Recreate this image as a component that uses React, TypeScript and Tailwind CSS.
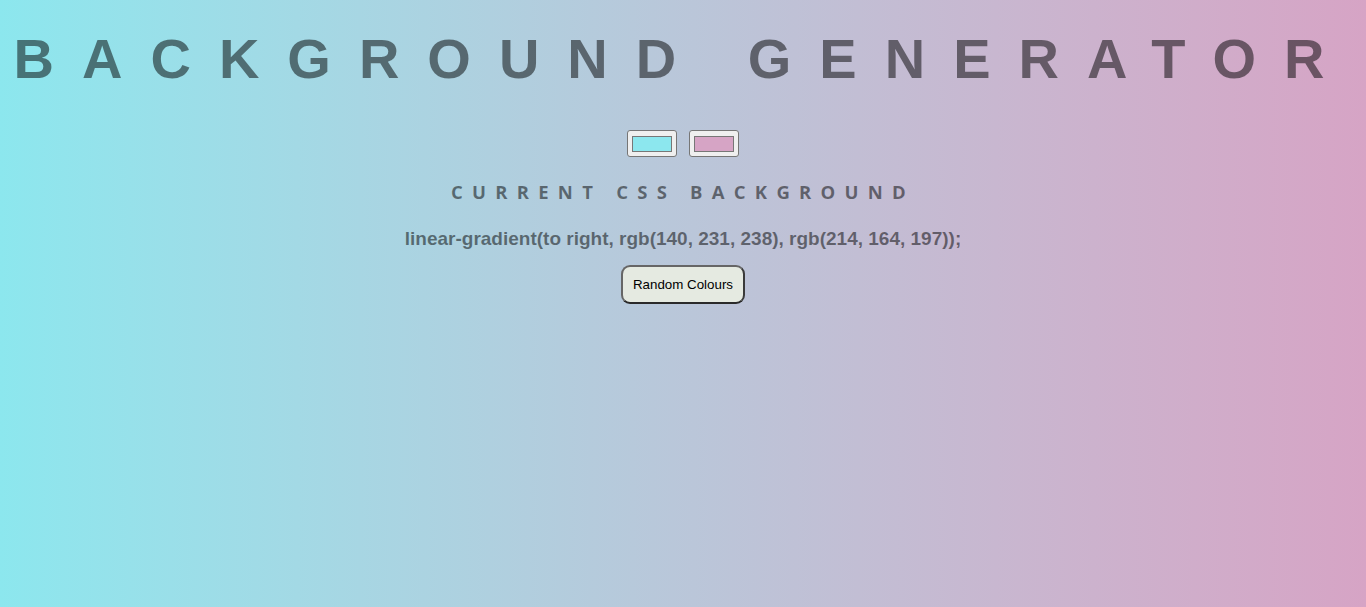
export default function App() {
  return (
    <div className="min-h-screen w-full bg-gradient-to-r from-[rgb(140,231,238)] to-[rgb(214,164,197)] text-black/50 text-center font-['Liberation_Sans',Arial,sans-serif]">
      {/* Title */}
      <h1 className="pt-[27px] text-[56px] leading-[64px] font-bold tracking-[0.5em] whitespace-nowrap">
        BACKGROUND GENERATOR
      </h1>

      {/* Colour pickers */}
      <div className="mt-[39px] flex justify-center gap-3">
        <div className="w-[50px] h-[27px] bg-[#efefef] border border-[#767676] rounded-[3px] flex items-center justify-center">
          <div className="w-[40px] h-[16px] bg-[rgb(140,231,238)] border border-[#777]" />
        </div>
        <div className="w-[50px] h-[27px] bg-[#efefef] border border-[#767676] rounded-[3px] flex items-center justify-center">
          <div className="w-[40px] h-[16px] bg-[rgb(214,164,197)] border border-[#777]" />
        </div>
      </div>

      {/* Current CSS heading */}
      <h3 className="mt-[20px] text-[18.5px] leading-[30px] font-bold tracking-[0.5em] font-['Open_Sans',sans-serif]">
        CURRENT CSS BACKGROUND
      </h3>

      <h3 className="mt-[21px] text-[19px] leading-[22px] font-bold">
        linear-gradient(to right, rgb(140, 231, 238), rgb(214, 164, 197));
      </h3>

      <div className="mt-[15px] flex justify-center">
        <button className="h-[39px] px-[10px] bg-[#e5eae1] text-black text-[13.33px] border-2 border-[#666] border-b-[#2a2a2a] border-r-[#3a3a3a] rounded-[9px] font-['Liberation_Sans',Arial,sans-serif]">
          Random Colours
        </button>
      </div>
    </div>
  );
}
